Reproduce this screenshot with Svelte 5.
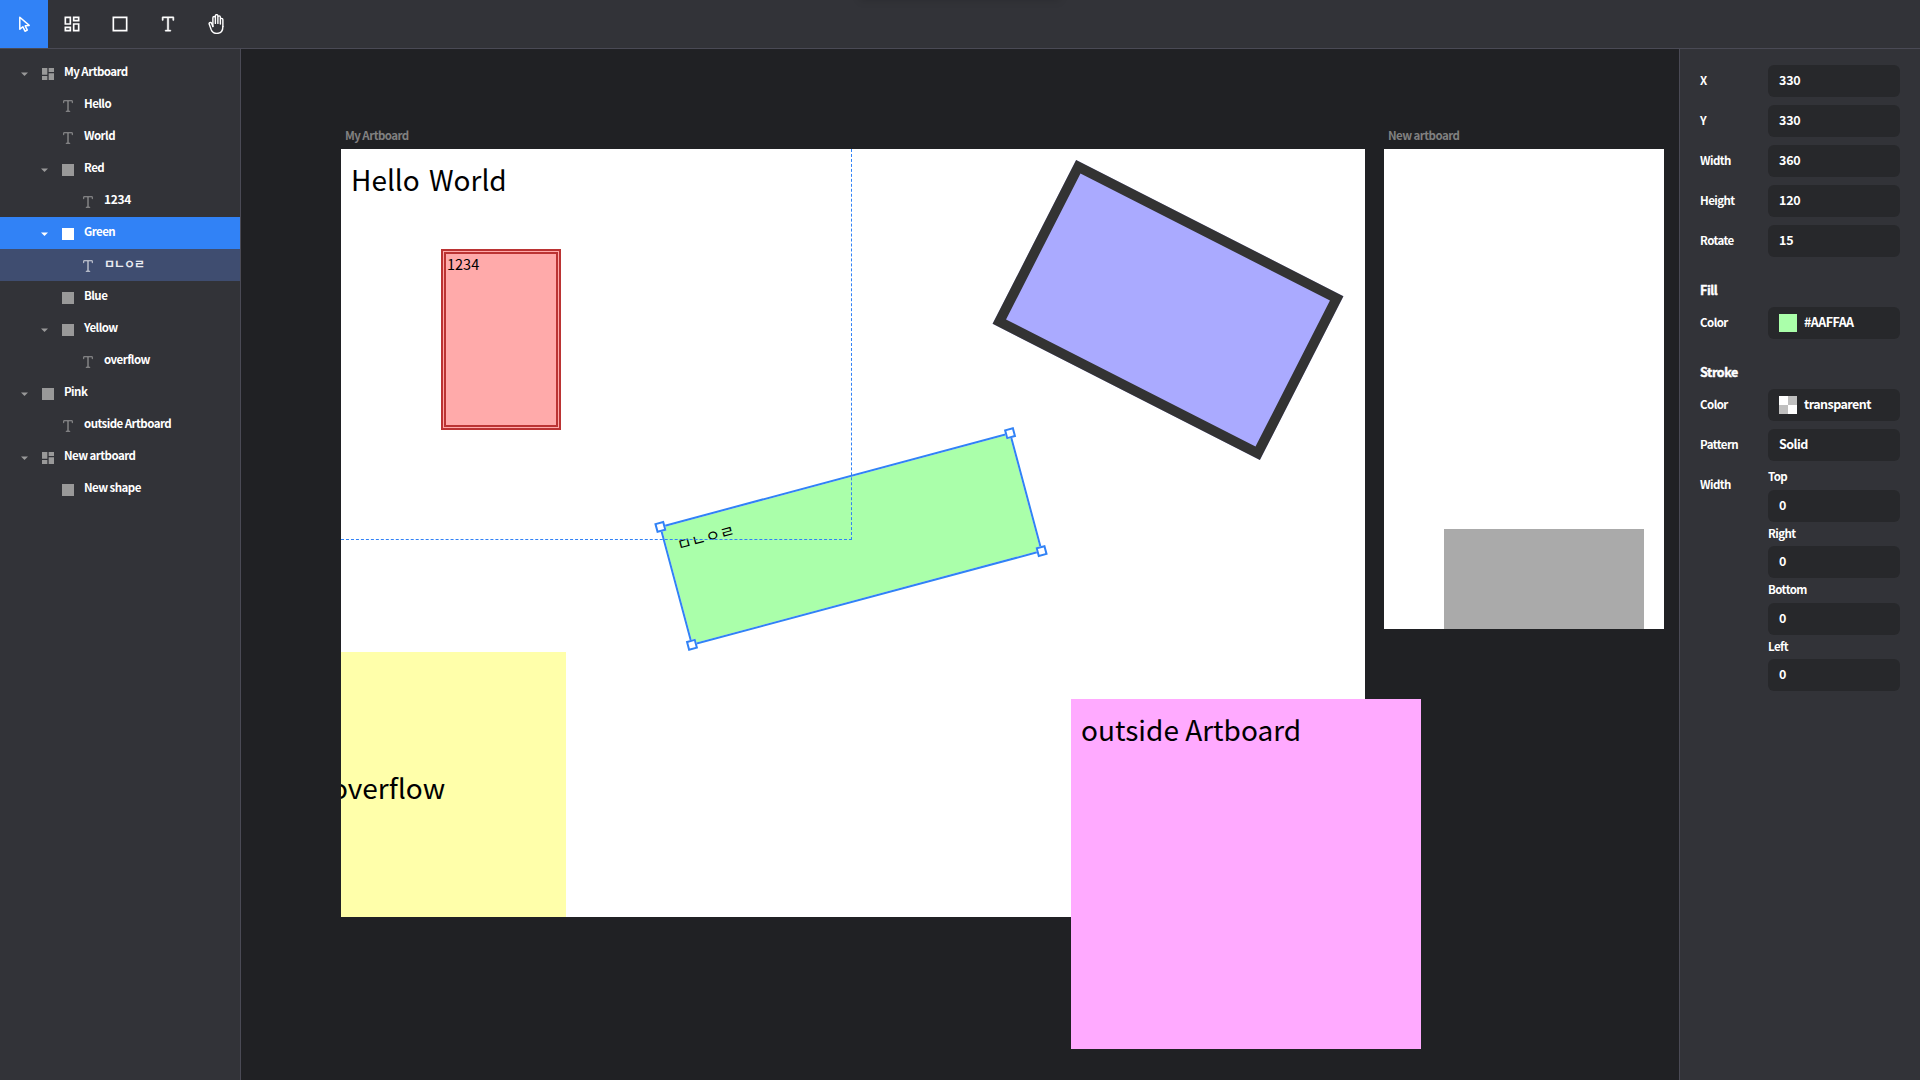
<script>
  const tree = [
    { name: 'My Artboard', kind: 'artboard', depth: 0, open: true },
    { name: 'Hello', kind: 'text', depth: 1 },
    { name: 'World', kind: 'text', depth: 1 },
    { name: 'Red', kind: 'shape', depth: 1, open: true },
    { name: '1234', kind: 'text', depth: 2, digits: true },
    { name: 'Green', kind: 'shape', depth: 1, open: true, state: 'selected' },
    { name: 'ㅁㄴㅇㄹ', kind: 'text', depth: 2, state: 'within' },
    { name: 'Blue', kind: 'shape', depth: 1 },
    { name: 'Yellow', kind: 'shape', depth: 1, open: true },
    { name: 'overflow', kind: 'text', depth: 2 },
    { name: 'Pink', kind: 'shape', depth: 0, open: true },
    { name: 'outside Artboard', kind: 'text', depth: 1 },
    { name: 'New artboard', kind: 'artboard', depth: 0, open: true },
    { name: 'New shape', kind: 'shape', depth: 1 }
  ];

  const tools = ['select', 'artboard', 'shape', 'text', 'hand'];
  const geometry = [
    ['X', '330'],
    ['Y', '330'],
    ['Width', '360'],
    ['Height', '120'],
    ['Rotate', '15']
  ];
  const sides = ['Top', 'Right', 'Bottom', 'Left'];
</script>

{#snippet textIcon()}
  <svg viewBox="0 0 15 15" fill="currentColor"><path fill-rule="evenodd" d="M3.95 2.95V4.5a.45.45 0 0 1-.9 0v-2a.45.45 0 0 1 .45-.45h8a.45.45 0 0 1 .45.45v2a.45.45 0 0 1-.9 0V2.95h-3v9.1h1.2a.45.45 0 0 1 0 .9h-3.5a.45.45 0 0 1 0-.9h1.2v-9.1z" /></svg>
{/snippet}

<div class="app">
  <header class="toolbar">
    {#each tools as tool}
      <button class="tool" class:active={tool === 'select'} class:heavy={tool === 'text'} aria-label={tool}>
        {#if tool === 'select'}
          <svg viewBox="0 0 20 20" fill="none" stroke="currentColor" stroke-width="1.5" stroke-linejoin="round"><path d="M5.8 3.3v12l3-2.6 2.2 4.5 2.3-1.1-2.1-4.3 4-.4z" /></svg>
        {:else if tool === 'artboard'}
          <svg viewBox="0 0 24 24" fill="currentColor"><path d="M19 5v2h-4V5h4M9 5v6H5V5h4m10 8v6h-4v-6h4M9 17v2H5v-2h4M21 3h-8v6h8V3zM11 3H3v10h8V3zm10 8h-8v10h8V11zm-10 4H3v6h8v-6z" /></svg>
        {:else if tool === 'shape'}
          <svg viewBox="0 0 24 24" fill="none" stroke="currentColor" stroke-width="2"><path d="M4 4h16v16H4z" /></svg>
        {:else if tool === 'text'}
          {@render textIcon()}
        {:else}
          <svg viewBox="0 0 512 512" fill="none" stroke="currentColor" stroke-width="36" stroke-linecap="round" stroke-linejoin="round"><g transform="matrix(-1 0 0 1 512 0)"><path d="M80 320V144a32 32 0 0 1 64 0v112M144 256V80a32 32 0 0 1 64 0v160M272 241V96a32 32 0 0 1 64 0v224M208 240V48a32 32 0 0 1 64 0v192" /><path d="M80 320c0 117.4 64 176 152 176s123.7-39.6 144-88l52.7-144c6.7-18 3.6-34.8-11.9-43.6s-35.9-4.3-44.3 11.7L336 320" /></g></svg>
        {/if}
      </button>
    {/each}
    <div class="top-shade"></div>
  </header>

  <div class="body">
    <nav class="layers">
      {#each tree as item}
        <div class="layer {item.state ?? ''}" style:padding-left="{16 + item.depth * 20}px">
          <span class="caret">
            {#if item.open}
              <svg viewBox="0 0 16 16" fill="currentColor"><path d="M5 6.4h7L8.5 9.9z" /></svg>
            {/if}
          </span>
          <span class="kind">
            {#if item.kind === 'artboard'}
              <svg viewBox="0 0 24 24" fill="currentColor"><path d="M3 13h8V3H3v10zm0 8h8v-6H3v6zm10 0h8V11h-8v10zm0-18v6h8V3h-8z" /></svg>
            {:else if item.kind === 'text'}
              {@render textIcon()}
            {:else}
              <svg viewBox="0 0 24 24" fill="currentColor"><path d="M3 3h18v18H3z" /></svg>
            {/if}
          </span>
          <span class="name" class:digits-name={item.digits} class:jamo-name={item.state === 'within'}>{item.name}</span>
        </div>
      {/each}
    </nav>

    <main class="canvas">
      <span class="board-label first">My Artboard</span>
      <section class="board main-board">
        <span class="label hello">Hello</span>
        <span class="label world">World</span>
        <div class="shape red"><span class="label digits">1234</span></div>
        <div class="shape green"><span class="label jamo">ㅁㄴㅇㄹ</span></div>
        <div class="shape blue"></div>
        <div class="shape yellow"><span class="label overflow">overflow</span></div>
      </section>
      <span class="board-label second">New artboard</span>
      <section class="board new-board">
        <div class="shape gray"></div>
      </section>
      <div class="shape pink"><span class="label outside">outside Artboard</span></div>

      <div class="guides"></div>
      <div class="selection">
        <i class="handle nw"></i><i class="handle ne"></i><i class="handle sw"></i><i class="handle se"></i>
      </div>
    </main>

    <aside class="inspector">
      {#each geometry as [label, value]}
        <div class="field"><span class="key">{label}</span><div class="input number">{value}</div></div>
      {/each}

      <h2>Fill</h2>
      <div class="field"><span class="key">Color</span><div class="input"><i class="swatch mint"></i><span>#AAFFAA</span></div></div>

      <h2>Stroke</h2>
      <div class="field"><span class="key">Color</span><div class="input"><i class="swatch checker"></i><span>transparent</span></div></div>
      <div class="field"><span class="key">Pattern</span><div class="input">Solid</div></div>
      <div class="field tall">
        <span class="key">Width</span>
        <div class="sides">
          {#each sides as side}
            <span class="side">{side}</span>
            <div class="input number">0</div>
          {/each}
        </div>
      </div>
    </aside>
  </div>
</div>

<style>
  :global(body) {
    margin: 0;
    overflow: hidden;
    background: #202124;
  }
  .app {
    display: flex;
    flex-direction: column;
    width: 1920px;
    height: 1080px;
    font-family: 'Noto Sans CJK KR', 'Noto Sans', sans-serif;
    font-size: 11.5px;
    font-weight: 700;
    letter-spacing: -0.55px;
    color: #fff;
    overflow: hidden;
  }
  svg {
    display: block;
  }
  .toolbar {
    position: relative;
    flex: none;
    display: flex;
    height: 48px;
    background: #323338;
    border-bottom: 1px solid #4a4a55;
    overflow: hidden;
  }
  .tool {
    display: grid;
    place-items: center;
    width: 48px;
    height: 48px;
    padding: 0;
    border: 0;
    background: none;
    color: #fff;
  }
  .tool.active {
    background: #3182f6;
  }
  .tool svg {
    width: 20px;
    height: 20px;
  }
  .tool.heavy svg {
    stroke: currentColor;
    stroke-width: 0.35;
  }
  .top-shade {
    position: absolute;
    top: -10px;
    left: 860px;
    width: 200px;
    height: 10px;
    box-shadow: 0 0 8px rgba(0, 0, 0, 0.15);
  }
  .body {
    flex: 1;
    display: flex;
    min-height: 0;
  }

  .layers {
    flex: none;
    box-sizing: border-box;
    width: 241px;
    padding-top: 8px;
    background: #323338;
    border-right: 1px solid #4a4a55;
  }
  .layer {
    display: flex;
    align-items: center;
    height: 32px;
    color: #999;
  }
  .layer.selected {
    background: #3182f6;
    color: #fff;
  }
  .layer.within {
    background: #3f4d70;
    color: #d9dbe2;
  }
  .caret,
  .kind {
    width: 16px;
    height: 16px;
    margin-top: 2px;
  }
  .kind {
    margin: 2px 8px 0 8px;
  }
  .name {
    color: #fff;
    line-height: 28px;
    padding-bottom: 4px;
  }
  .digits-name {
    font-size: 12px;
    letter-spacing: -0.3px;
  }
  .jamo-name {
    color: #e8eaf0;
    font-size: 12px;
    letter-spacing: -1px;
    line-height: 30px;
    padding-bottom: 2px;
  }

  .canvas {
    position: relative;
    flex: 1;
    overflow: hidden;
    background: #202124;
  }
  .board,
  .shape,
  .label,
  .board-label,
  .guides,
  .selection,
  .handle {
    position: absolute;
    box-sizing: border-box;
  }
  .board {
    top: 100px;
    background: #fff;
    overflow: hidden;
  }
  .main-board {
    left: 100px;
    width: 1024px;
    height: 768px;
  }
  .new-board {
    left: 1143px;
    width: 280px;
    height: 480px;
  }
  .board-label {
    top: 77px;
    line-height: 18px;
    color: #808080;
  }
  .first {
    left: 104px;
  }
  .second {
    left: 1147px;
  }
  .label {
    color: #000;
    font-weight: 400;
    font-size: 28px;
    line-height: 44px;
    letter-spacing: 0;
    white-space: nowrap;
  }
  .hello {
    left: 10px;
    top: 8px;
  }
  .world {
    left: 88px;
    top: 8px;
  }
  .red {
    left: 100px;
    top: 100px;
    width: 120px;
    height: 181px;
    background: #faa;
    border: 5px double #b33;
  }
  .digits {
    left: 1px;
    top: -1px;
    font-size: 14.5px;
    line-height: 22px;
  }
  .green {
    left: 330px;
    top: 330px;
    width: 360px;
    height: 120px;
    background: #afa;
    transform: rotate(-15deg);
  }
  .jamo {
    left: 10.5px;
    top: 8px;
    font-size: 16px;
    line-height: 24px;
  }
  .blue {
    left: 677px;
    top: 69px;
    width: 300px;
    height: 184px;
    background: #aaf;
    border: 10px solid #333;
    transform: rotate(27deg);
  }
  .yellow {
    left: -75px;
    top: 503px;
    width: 300px;
    height: 300px;
    background: #ffa;
  }
  .overflow {
    left: 65px;
    top: 113px;
  }
  .gray {
    left: 60px;
    top: 380px;
    width: 200px;
    height: 100px;
    background: #aaa;
  }
  .pink {
    left: 830px;
    top: 650px;
    width: 350px;
    height: 350px;
    background: #faf;
  }
  .outside {
    left: 10px;
    top: 8px;
  }
  .guides {
    left: 100px;
    top: 100px;
    width: 511px;
    height: 391px;
    border: 0 dashed #3182f6;
    border-width: 0 1px 1px 0;
  }
  .selection {
    left: 429.5px;
    top: 429.5px;
    width: 360px;
    height: 120px;
    outline: 2px solid #3182f6;
    transform: rotate(-15deg);
  }
  .handle {
    width: 10px;
    height: 10px;
    background: #fff;
    border: 2px solid #3182f6;
  }
  .nw {
    left: -6px;
    top: -6px;
  }
  .ne {
    right: -6px;
    top: -6px;
  }
  .sw {
    left: -6px;
    bottom: -6px;
  }
  .se {
    right: -6px;
    bottom: -6px;
  }

  .inspector {
    flex: none;
    box-sizing: border-box;
    width: 241px;
    padding: 16px 20px 0;
    background: #323338;
    border-left: 1px solid #4a4a55;
  }
  .field {
    display: flex;
    align-items: center;
    height: 32px;
    margin-bottom: 8px;
  }
  .key {
    width: 68px;
    padding-bottom: 2px;
  }
  .input {
    box-sizing: border-box;
    display: flex;
    align-items: center;
    width: 132px;
    height: 32px;
    padding: 0 11px 3px;
    border-radius: 6px;
    background: #27282b;
    font-size: 12.5px;
  }
  .number {
    letter-spacing: -0.2px;
  }
  .swatch {
    width: 18px;
    height: 18px;
    margin: 3px 7px 0 0;
  }
  .mint {
    background: #afa;
  }
  .checker {
    background: conic-gradient(#bfbfbf 25%, #fff 0 50%, #bfbfbf 0 75%, #fff 0);
  }
  h2 {
    height: 24px;
    margin: 26px 0 0;
    font-size: 12.5px;
    font-weight: 700;
    line-height: 13px;
    letter-spacing: -0.4px;
    -webkit-text-stroke: 0.4px #fff;
  }
  .tall {
    align-items: flex-start;
    height: auto;
  }
  .tall .key {
    line-height: 31px;
  }
  .sides {
    display: flex;
    flex-direction: column;
  }
  .side {
    height: 24.4px;
    line-height: 23px;
  }
  .side:first-child {
    height: 21px;
    line-height: 15px;
  }
</style>
